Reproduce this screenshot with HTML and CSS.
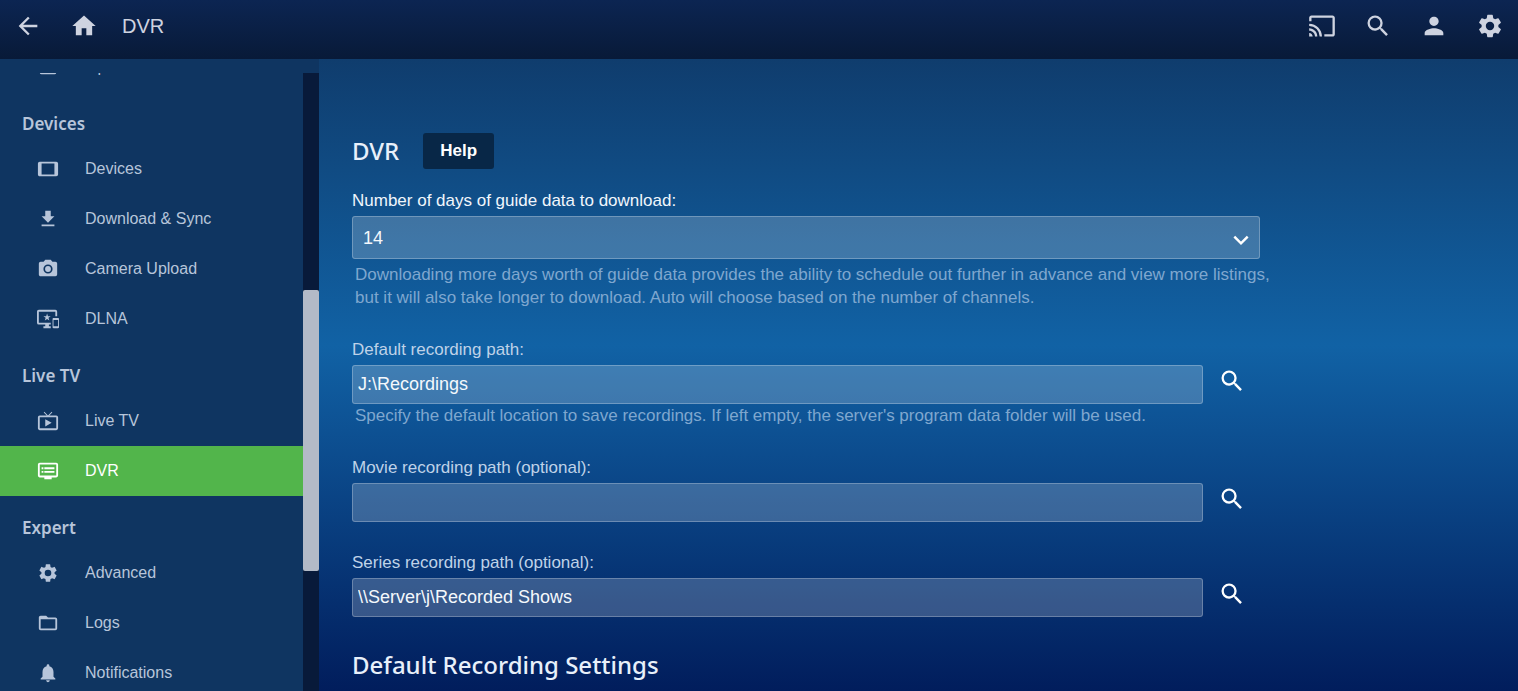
FILE: index.html
```
<!DOCTYPE html>
<html lang="en">
  <head>
    <meta charset="UTF-8" />
    <meta name="viewport" content="width=device-width, initial-scale=1.0" />
    <title>DVR</title>
    <link rel="stylesheet" href="styles.css">
  </head>
  <body>
    <svg width="0" height="0" hidden>
      <symbol id="icon-search" viewBox="0 0 24 24">
        <path d="M15.5 14h-.79l-.28-.27A6.47 6.47 0 0 0 16 9.5 6.5 6.5 0 1 0 9.5 16c1.61 0 3.09-.59 4.23-1.57l.27.28v.79l5 4.99L20.49 19l-4.99-5zm-6 0C7.01 14 5 11.99 5 9.5S7.01 5 9.5 5 14 7.01 14 9.5 11.99 14 9.5 14z" />
      </symbol>
      <symbol id="icon-gear" viewBox="0 0 24 24">
        <path d="M19.14 12.94c.04-.3.06-.61.06-.94 0-.32-.02-.64-.07-.94l2.03-1.58a.49.49 0 0 0 .12-.61l-1.92-3.32a.49.49 0 0 0-.59-.22l-2.39.96c-.5-.38-1.03-.7-1.62-.94l-.36-2.54a.48.48 0 0 0-.48-.41h-3.84c-.24 0-.43.17-.47.41l-.36 2.54c-.59.24-1.13.57-1.62.94l-2.39-.96c-.22-.08-.47 0-.59.22L2.740 8.870c-.12.21-.08.47.12.61l2.030 1.580c-.05.3-.09.63-.09.94s.02.64.07.94l-2.030 1.580a.49.49 0 0 0-.12.61l1.920 3.320c.12.22.37.29.59.22l2.390-.96c.5.38 1.030.7 1.620.94l.36 2.540c.05.24.24.41.48.41h3.840c.24 0 .44-.17.47-.41l.36-2.540c.59-.24 1.130-.56 1.620-.94l2.390.96c.22.08.47 0 .59-.22l1.920-3.320c.12-.22.07-.47-.12-.61l-2.010-1.580zM12 15.600A3.600 3.600 0 1 1 12 8.400a3.600 3.600 0 0 1 0 7.200z" />
      </symbol>
    </svg>

    <header class="header">
      <button type="button" class="icon-btn" aria-label="Back">
        <svg class="icon" viewBox="0 0 24 24"><path d="M20 11H7.830l5.590-5.590L12 4l-8 8 8 8 1.410-1.410L7.830 13H20v-2z" /></svg>
      </button>
      <button type="button" class="icon-btn" aria-label="Home">
        <svg class="icon" viewBox="0 0 24 24"><path d="M10 20v-6h4v6h5v-8h3L12 3 2 12h3v8z" /></svg>
      </button>
      <h1 class="header-title">DVR</h1>
      <button type="button" class="icon-btn" aria-label="Cast">
        <svg class="icon" viewBox="0 0 24 24"><path d="M21 3H3c-1.1 0-2 .9-2 2v3h2V5h18v14h-7v2h7c1.1 0 2-.9 2-2V5c0-1.1-.9-2-2-2zM1 18v3h3c0-1.660-1.340-3-3-3zm0-4v2c2.760 0 5 2.240 5 5h2c0-3.870-3.130-7-7-7zm0-4v2a9 9 0 0 1 9 9h2c0-6.080-4.930-11-11-11z" /></svg>
      </button>
      <button type="button" class="icon-btn" aria-label="Search">
        <svg class="icon"><use href="#icon-search" /></svg>
      </button>
      <button type="button" class="icon-btn" aria-label="User">
        <svg class="icon" viewBox="0 0 24 24"><path d="M12 12c2.210 0 4-1.790 4-4s-1.790-4-4-4-4 1.790-4 4 1.790 4 4 4zm0 2c-2.670 0-8 1.340-8 4v2h16v-2c0-2.660-5.330-4-8-4z" /></svg>
      </button>
      <button type="button" class="icon-btn" aria-label="Settings">
        <svg class="icon"><use href="#icon-gear" /></svg>
      </button>
    </header>

    <div class="page">
      <aside class="sidebar">
        <nav class="nav">
          <div class="nav-list">
            <a href="#" class="nav-item">
              <svg class="nav-icon" viewBox="0 0 24 24"><path d="M19 4H5a2 2 0 0 0-2 2v12a2 2 0 0 0 2 2h14a2 2 0 0 0 2-2V6a2 2 0 0 0-2-2zm0 14H5V6h14v12zM7 15h4v-1.500H8.500v-3H11V9H7zm6 0h4v-1.500h-2.500v-3H17V9h-4z" /></svg>
              Open Subtitles
            </a>
            <section class="nav-group">
              <h2 class="nav-heading">Devices</h2>
              <a href="#" class="nav-item">
                <svg class="nav-icon" viewBox="0 0 24 24"><path d="M21 4H3a2 2 0 0 0-2 2v12c0 1.100.9 2 2 2h18a2 2 0 0 0 2-2V6a2 2 0 0 0-2-2zm-2 14H5V6h14v12z" /></svg>
                Devices
              </a>
              <a href="#" class="nav-item">
                <svg class="nav-icon" viewBox="0 0 24 24"><path d="M19 9h-4V3H9v6H5l7 7 7-7zM5 18v2h14v-2H5z" /></svg>
                Download &amp; Sync
              </a>
              <a href="#" class="nav-item">
                <svg class="nav-icon" viewBox="0 0 24 24"><path fill-rule="evenodd" d="M9 2 7.170 4H4a2 2 0 0 0-2 2v12c0 1.100.9 2 2 2h16a2 2 0 0 0 2-2V6a2 2 0 0 0-2-2h-3.170L15 2H9zm3 15a5 5 0 1 1 0-10 5 5 0 0 1 0 10zm0-1.800a3.200 3.200 0 1 0 0-6.400 3.200 3.200 0 0 0 0 6.400z" /></svg>
                Camera Upload
              </a>
              <a href="#" class="nav-item">
                <svg class="nav-icon" viewBox="0 0 24 24"><path d="M23 11.010 18 11c-.55 0-1 .45-1 1v9c0 .55.45 1 1 1h5c.55 0 1-.45 1-1v-9c0-.55-.45-.99-1-.99zM23 20h-5v-7h5v7zM20 2H2C.89 2 0 2.890 0 4v12a2 2 0 0 0 2 2h7v2H7v2h8v-2h-2v-2h2v-2H2V4h18v5h2V4a2 2 0 0 0-2-2zm-8.030 7L11 6l-.97 3H7l2.470 1.760-.94 2.910 2.470-1.800 2.470 1.800-.94-2.910L15 9h-3.030z" /></svg>
                DLNA
              </a>
            </section>
            <section class="nav-group">
              <h2 class="nav-heading">Live TV</h2>
              <a href="#" class="nav-item">
                <svg class="nav-icon" viewBox="0 0 24 24"><path d="M21 6h-7.590l3.290-3.290L16 2l-4 4-4-4-.7.710L10.590 6H3a2 2 0 0 0-2 2v12c0 1.100.9 2 2 2h18a2 2 0 0 0 2-2V8a2 2 0 0 0-2-2zm0 14H3V8h18v12zM9 10v8l7-4z" /></svg>
                Live TV
              </a>
              <a href="#" class="nav-item nav-item-active" aria-current="page">
                <svg class="nav-icon" viewBox="0 0 24 24"><path d="M21 3H3a2 2 0 0 0-2 2v12c0 1.100.9 2 2 2h5v2h8v-2h5a2 2 0 0 0 2-2V5a2 2 0 0 0-2-2zm0 14H3V5h18v12zM19 8H8v2h11V8zm0 4H8v2h11v-2zM7 8H5v2h2V8zm0 4H5v2h2v-2z" /></svg>
                DVR
              </a>
            </section>
            <section class="nav-group">
              <h2 class="nav-heading">Expert</h2>
              <a href="#" class="nav-item">
                <svg class="nav-icon"><use href="#icon-gear" /></svg>
                Advanced
              </a>
              <a href="#" class="nav-item">
                <svg class="nav-icon" viewBox="0 0 24 24"><path d="M20 6h-8l-2-2H4c-1.100 0-2 .9-2 2v12a2 2 0 0 0 2 2h16a2 2 0 0 0 2-2V8a2 2 0 0 0-2-2zm0 12H4V8h16v10z" /></svg>
                Logs
              </a>
              <a href="#" class="nav-item">
                <svg class="nav-icon" viewBox="0 0 24 24"><path d="M12 22a2 2 0 0 0 2-2h-4c0 1.100.89 2 2 2zm6-6v-5c0-3.070-1.640-5.640-4.500-6.320V4a1.500 1.500 0 0 0-3 0v.68C7.630 5.360 6 7.920 6 11v5l-2 2v1h16v-1l-2-2z" /></svg>
                Notifications
              </a>
            </section>
          </div>
        </nav>
        <div class="scroll-track">
          <div class="scroll-thumb"></div>
        </div>
      </aside>

      <main class="main">
        <form class="form">
          <div class="title-row">
            <h2 class="title">DVR</h2>
            <button type="button" class="help-btn">Help</button>
          </div>

          <div class="field">
            <label for="guideDays" class="label label-focus">Number of days of guide data to download:</label>
            <div class="select-wrap">
              <select id="guideDays" class="control select">
                <option>Auto</option>
                <option>7</option>
                <option selected>14</option>
              </select>
              <svg class="select-arrow" viewBox="0 0 24 24"><path d="M4 8l8 8 8-8" /></svg>
            </div>
            <p class="description description-spaced">Downloading more days worth of guide data provides the ability to schedule out further in advance and view more listings, but it will also take longer to download. Auto will choose based on the number of channels.</p>
          </div>

          <div class="field">
            <label for="defaultPath" class="label">Default recording path:</label>
            <div class="path-row">
              <input type="text" id="defaultPath" class="control input" value="J:\Recordings" />
              <button type="button" class="browse-btn" aria-label="Browse"><svg class="icon"><use href="#icon-search" /></svg></button>
            </div>
            <p class="description">Specify the default location to save recordings. If left empty, the server's program data folder will be used.</p>
          </div>

          <div class="field">
            <label for="moviePath" class="label">Movie recording path (optional):</label>
            <div class="path-row">
              <input type="text" id="moviePath" class="control input" />
              <button type="button" class="browse-btn" aria-label="Browse"><svg class="icon"><use href="#icon-search" /></svg></button>
            </div>
          </div>

          <div class="field">
            <label for="seriesPath" class="label">Series recording path (optional):</label>
            <div class="path-row">
              <input type="text" id="seriesPath" class="control input" value="\\Server\j\Recorded Shows" />
              <button type="button" class="browse-btn" aria-label="Browse"><svg class="icon"><use href="#icon-search" /></svg></button>
            </div>
          </div>

          <h2 class="title">Default Recording Settings</h2>
        </form>
      </main>
    </div>
  </body>
</html>
```
FILE: styles.css
```
* {
  box-sizing: border-box;
}
body {
  display: flex;
  flex-direction: column;
  height: 100vh;
  margin: 0;
  overflow: hidden;
  font-family: "Liberation Sans", Arial, sans-serif;
  font-size: 17px;
  color: #fff;
  background: linear-gradient(#0f3562, #1162a5 50%, #011d5c);
}
h1,
h2,
p {
  margin: 0;
}
button {
  padding: 0;
  border: 0;
  background: none;
  color: inherit;
  font-family: inherit;
  cursor: pointer;
}
.icon {
  display: block;
  width: 28px;
  height: 28px;
  fill: currentColor;
}

/* header */
.header {
  display: flex;
  align-items: center;
  flex: none;
  height: 59px;
  padding-bottom: 7px;
  color: #ced3e0;
  background: linear-gradient(#0c2552, #081a38);
}
.icon-btn {
  display: flex;
  align-items: center;
  justify-content: center;
  width: 56px;
  height: 52px;
}
.header-title {
  flex: 1;
  padding-left: 10px;
  font-size: 20px;
  font-weight: normal;
}

/* sidebar */
.page {
  display: flex;
  flex: 1;
  min-height: 0;
}
.sidebar {
  display: flex;
  flex: none;
  width: 319px;
  padding-top: 14px;
  background: #0f3561;
}
.nav {
  flex: 1;
  overflow: hidden;
}
/* list is scrolled, first row is partly hidden */
.nav-list {
  margin-top: -31px;
}
.nav-group {
  padding-top: 2px;
}
.nav-heading {
  height: 50px;
  padding: 0 22px;
  font-family: "Noto Sans", sans-serif;
  font-size: 17px;
  font-weight: 600;
  line-height: 59px;
  color: #b7c5da;
}
.nav-item {
  display: flex;
  align-items: center;
  gap: 26px;
  height: 50px;
  padding-left: 37px;
  font-size: 16px;
  color: #b7c5da;
  text-decoration: none;
}
.nav-item-active {
  color: #fff;
  background: #52b54b;
}
.nav-icon {
  width: 22px;
  height: 22px;
  fill: currentColor;
}
.scroll-track {
  width: 16px;
  padding-top: 217px;
  background: #081a3a;
}
.scroll-thumb {
  height: 281px;
  border-radius: 2px;
  background: #b3bac7;
}

/* content */
.main {
  flex: 1;
  overflow: hidden;
  padding: 74px 34px 0 33px;
}
.form {
  max-width: 908px;
}
.title-row {
  display: flex;
  align-items: center;
  gap: 24px;
  margin-bottom: 21px;
}
.title {
  font-family: "Noto Sans", sans-serif;
  font-size: 24px;
  font-weight: 500;
  line-height: 36px;
  color: #e8f0fa;
}
.help-btn {
  height: 36px;
  padding: 0 17px;
  border-radius: 3px;
  font-size: 17px;
  font-weight: bold;
  color: #fff;
  background: #082747;
}
.field {
  margin-bottom: 30px;
}
.label {
  display: block;
  margin-bottom: 4px;
  line-height: 22px;
  color: #bfd2e8;
}
.label-focus {
  color: #f0f6fc;
}
.control {
  width: 100%;
  height: 39px;
  border: 1px solid rgba(255, 255, 255, 0.25);
  border-radius: 3px;
  font-family: inherit;
  font-size: 18px;
  color: #f4f8fc;
  background: rgba(255, 255, 255, 0.2);
  outline: none;
}
.input {
  flex: 1;
  min-width: 0;
  padding: 0 5px;
}
.select-wrap {
  position: relative;
}
.select {
  display: block;
  height: 43px;
  padding: 0 10px;
  appearance: none;
}
.select option {
  color: #000;
}
.select-arrow {
  position: absolute;
  top: 14px;
  right: 9px;
  width: 20px;
  height: 20px;
  fill: none;
  stroke: #fff;
  stroke-width: 3;
  pointer-events: none;
}
.path-row {
  display: flex;
}
.browse-btn {
  display: flex;
  align-items: center;
  justify-content: center;
  flex: none;
  width: 57px;
  height: 32px;
}
.description {
  margin-right: -12px;
  padding-left: 3px;
  line-height: 23px;
  color: #7fa7cf;
}
.description-spaced {
  margin-top: 4px;
}
```
